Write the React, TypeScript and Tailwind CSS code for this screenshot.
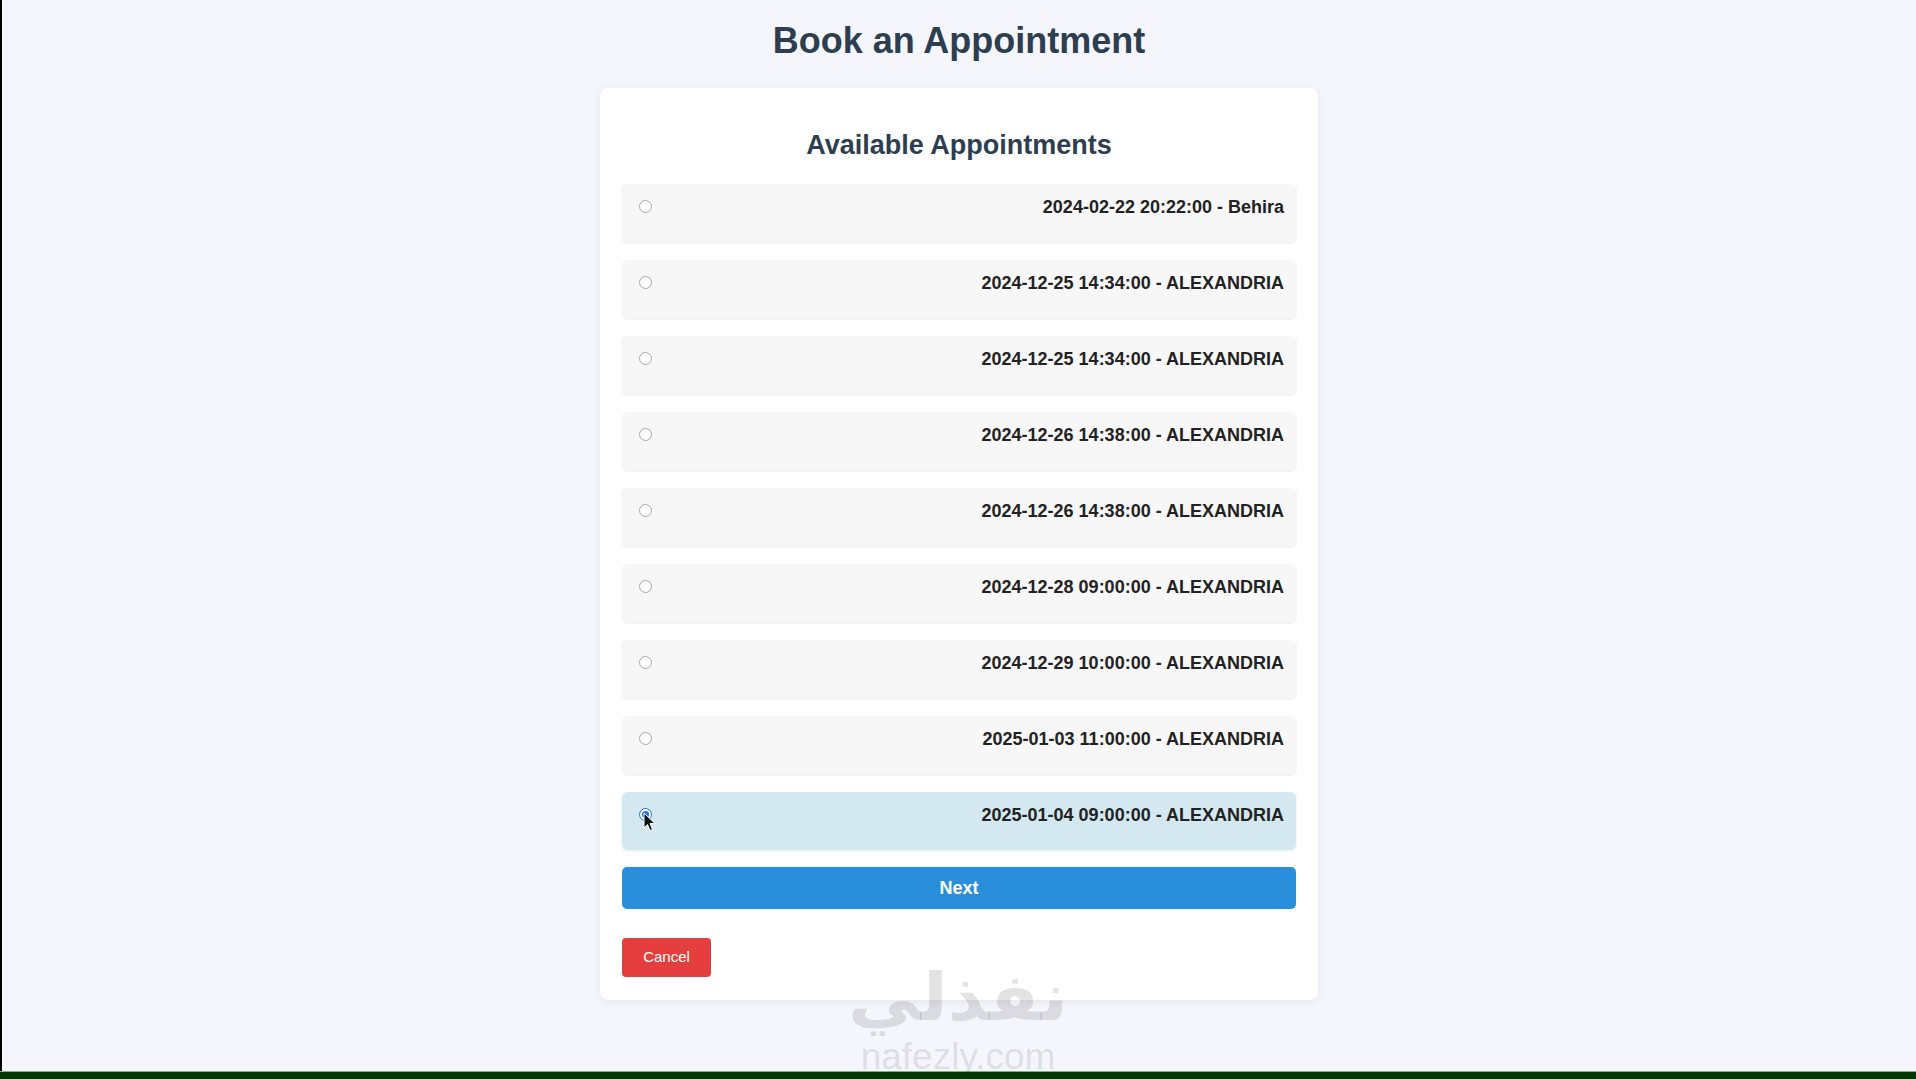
import { useState } from "react";

const slots = [
	"2024-02-22 20:22:00 - Behira",
	"2024-12-25 14:34:00 - ALEXANDRIA",
	"2024-12-25 14:34:00 - ALEXANDRIA",
	"2024-12-26 14:38:00 - ALEXANDRIA",
	"2024-12-26 14:38:00 - ALEXANDRIA",
	"2024-12-28 09:00:00 - ALEXANDRIA",
	"2024-12-29 10:00:00 - ALEXANDRIA",
	"2025-01-03 11:00:00 - ALEXANDRIA",
	"2025-01-04 09:00:00 - ALEXANDRIA",
];

function Cursor() {
	return (
		<svg className="pointer-events-none absolute left-[4px] top-[4px]" width="13" height="20" viewBox="0 0 13 20">
			<path d="M1 1 L1 16 L4.5 12.5 L7 18.5 L9.5 17.5 L7 11.5 L12 11.5 Z" fill="#111" stroke="#fff" strokeWidth="1" />
		</svg>
	);
}

function SlotRow({ label, checked, onPick }: { label: string; checked: boolean; onPick: () => void }) {
	return (
		<label
			onClick={onPick}
			className={`flex h-[58px] cursor-pointer items-start justify-between rounded-[6px] pl-[17px] pr-[12px] pt-[13px] shadow-[0_1px_3px_rgba(0,0,0,0.09)] ${checked ? "bg-[#d3e8f1]" : "bg-[#f7f7f7]"}`}
		>
			<span className="relative mt-[3px] block h-[13px] w-[13px]">
				{checked ? (
					<span className="flex h-[13px] w-[13px] items-center justify-center rounded-full border border-[#1a73e8] bg-white">
						<span className="h-[7px] w-[7px] rounded-full bg-[#1a73e8]" />
					</span>
				) : (
					<span className="block h-[13px] w-[13px] rounded-full border border-[#a8a8a8] bg-white" />
				)}
				{checked && <Cursor />}
			</span>
			<span className="text-[18px] font-bold leading-[21px] text-[#222]">{label}</span>
		</label>
	);
}

export default function App() {
	const [picked, setPicked] = useState(8);

	return (
		<div className="relative flex min-h-screen flex-col bg-[#f5f5fc] font-['Liberation_Sans',Arial,sans-serif]">
			<div className="flex-1 border-l-2 border-black">
				<h1 className="pt-[20px] text-center text-[36px] font-bold leading-[42px] text-[#2c3e50]">Book an Appointment</h1>

				<div className="mx-auto mt-[26px] w-[718px] rounded-[8px] bg-white px-[22px] pb-[23px] pt-[41px] shadow-[0_2px_10px_rgba(0,0,0,0.07)]">
					<h2 className="text-center text-[27px] font-bold leading-[32px] text-[#2c3e50]">Available Appointments</h2>

					<div className="mt-[23px] flex flex-col gap-[18px]">
						{slots.map((s, i) => (
							<SlotRow key={i} label={s} checked={picked === i} onPick={() => setPicked(i)} />
						))}
					</div>

					<button className="mt-[17px] h-[42px] w-full rounded-[5px] bg-[#2a8fdb] text-[18px] font-bold text-white">Next</button>

					<button className="mt-[29px] block h-[39px] w-[89px] rounded-[4px] bg-[#e53e3e] text-[15px] text-white">Cancel</button>
				</div>
			</div>
			<div className="h-[8px] border-t border-[#8aa88a] bg-[#053805]" />

			{/* watermark */}
			<div className="pointer-events-none absolute left-1/2 top-[959px] flex -translate-x-1/2 flex-col items-center text-black/[0.11]">
				<span className="inline-block scale-x-[1.09] font-['DejaVu_Sans',sans-serif] text-[66px] font-bold leading-[77px]">نفذلي</span>
				<span className="font-['Liberation_Sans',sans-serif] text-[37px] leading-[41px]">nafezly.com</span>
			</div>
		</div>
	);
}
